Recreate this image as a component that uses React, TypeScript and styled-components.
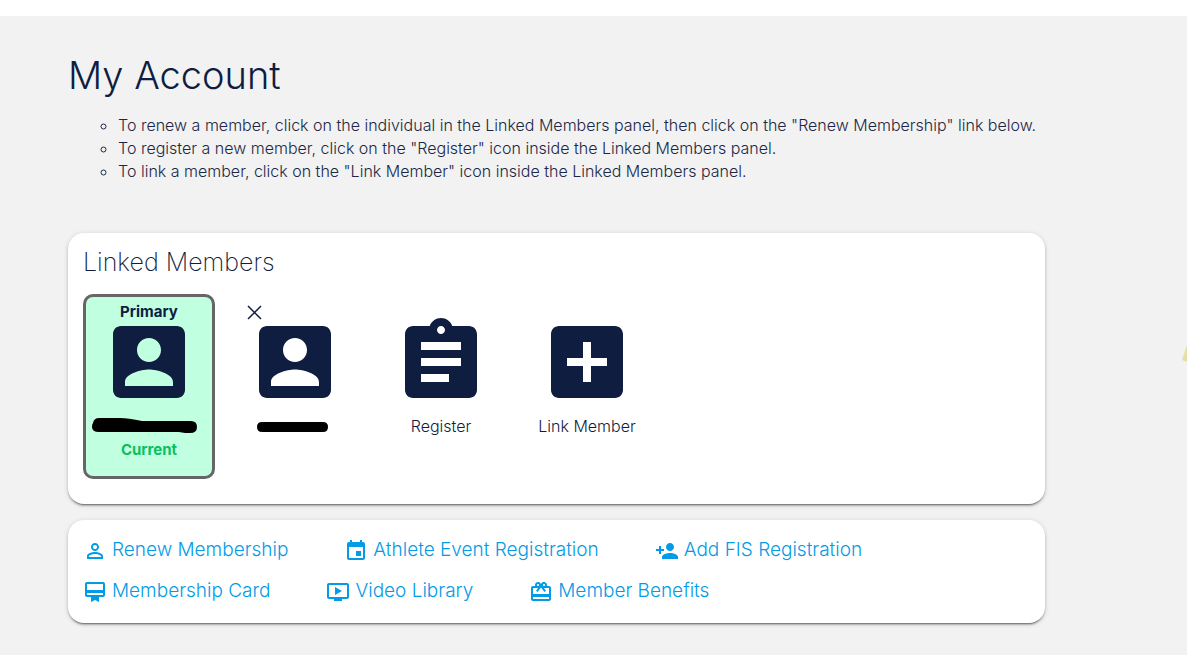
import React from "react";
import styled, { createGlobalStyle } from "styled-components";

const navy = "#0f1d40";
const blue = "#039be5";

const GlobalStyle = createGlobalStyle`
  *, *::before, *::after { box-sizing: border-box; }
  body {
    margin: 0;
    background: #f2f2f2;
    color: ${navy};
    font-family: Inter, "Open Sans", sans-serif;
    font-weight: 300;
    font-size: 16px;
  }
`;

const Page = styled.div`
  position: relative;
  min-height: 100vh;
  overflow: hidden;
  border-top: 16px solid #fff;
`;

const Main = styled.main`
  display: flex;
  flex-direction: column;
  margin: 0 142px 0 68px;
  padding: 35px 0 32px;
`;

const Title = styled.h1`
  margin: 0;
  font-size: 38px;
  line-height: 48px;
  font-weight: 300;
`;

const Steps = styled.ul`
  margin: 15px 0 50px;
  padding-left: 50px;
  list-style: circle;
  line-height: 23px;
  color: #1c2745;
`;

const Panel = styled.section`
  background: #fff;
  border-radius: 16px;
  box-shadow:
    0 2px 2px rgba(0, 0, 0, 0.2),
    0 3px 1px -2px rgba(0, 0, 0, 0.3),
    0 1px 5px rgba(0, 0, 0, 0.16);
  padding: 13px 15px 25px;

  & + & {
    margin-top: 16px;
    padding: 18px 15px 20px;
  }
`;

const PanelTitle = styled.h2`
  margin: 0 0 16px;
  font-size: 25px;
  line-height: 32px;
  font-weight: 200;
`;

const Tiles = styled.div`
  display: flex;
  flex-wrap: wrap;
  gap: 14px;
`;

const Tile = styled.div<{ $selected?: boolean }>`
  display: flex;
  flex-direction: column;
  align-items: stretch;
  width: 132px;
  min-height: 185px;
  padding-top: 3px;
  border: 3px solid ${(p) => (p.$selected ? "#666" : "transparent")};
  border-radius: 10px;
  background: ${(p) => (p.$selected ? "#c0ffe0" : "transparent")};
`;

const TileTop = styled.div`
  display: flex;
  height: 26px;
  padding: 0 10px 2px;
`;

const Badge = styled.strong`
  flex: 1;
  text-align: center;
  font-size: 15px;
  font-weight: 700;
  line-height: 24px;
`;

const CloseButton = styled.button`
  width: 24px;
  height: 24px;
  padding: 0;
  border: 0;
  background: none;
  color: ${navy};
  cursor: pointer;
`;

const TileButton = styled.button`
  display: flex;
  flex-direction: column;
  align-items: center;
  padding: 0;
  border: 0;
  background: none;
  color: ${navy};
  font: inherit;
  line-height: 23px;
  cursor: pointer;
`;

const TileIcon = styled.svg`
  width: 72px;
  height: 72px;
  margin-bottom: 17px;
  overflow: visible;
  fill: currentColor;
`;

const Redaction = styled.svg`
  display: block;
  width: 126px;
  height: 23px;
  fill: #000;
`;

const Status = styled.strong`
  color: #0abf61;
  font-size: 15px;
  font-weight: 700;
`;

const LinkRow = styled.nav`
  display: flex;
  flex-wrap: wrap;
  gap: 0 56px;

  & + & {
    margin-top: 17px;
  }
`;

const ActionLink = styled.a`
  display: flex;
  align-items: center;
  gap: 5px;
  color: ${blue};
  font-size: 19px;
  line-height: 24px;
  text-decoration: none;
`;

const Glyph = styled.svg`
  display: block;
  flex: none;
  width: 24px;
  height: 24px;
  margin-top: 1px;
  margin-bottom: -1px;
  fill: currentColor;
`;

const CloseGlyph = styled.svg`
  display: block;
  width: 24px;
  height: 24px;
  fill: none;
  stroke: currentColor;
  stroke-width: 1.5;
`;

const Accent = styled.svg`
  position: absolute;
  top: 329px;
  right: 0;
  width: 5px;
  height: 17px;
`;

const icons = {
  account:
    "M3 5v14c0 1.1.89 2 2 2h14c1.1 0 2-.9 2-2V5c0-1.1-.9-2-2-2H5c-1.11 0-2 .9-2 2zm12 4c0 1.66-1.34 3-3 3s-3-1.34-3-3 1.34-3 3-3 3 1.34 3 3zm-9 8c0-2 4-3.1 6-3.1s6 1.1 6 3.1v1H6v-1z",
  register:
    "M19 3h-4.18C14.4 1.84 13.3 1 12 1c-1.3 0-2.4.84-2.82 2H5c-1.1 0-2 .9-2 2v14c0 1.1.9 2 2 2h14c1.1 0 2-.9 2-2V5c0-1.1-.9-2-2-2zm-7 0c.55 0 1 .45 1 1s-.45 1-1 1-1-.45-1-1 .45-1 1-1zm2 14H7v-2h7v2zm3-4H7v-2h10v2zm0-4H7V7h10v2z",
  add: "M19 3H5c-1.11 0-2 .9-2 2v14c0 1.1.89 2 2 2h14c1.1 0 2-.9 2-2V5c0-1.1-.9-2-2-2zm-2 10h-4v4h-2v-4H7v-2h4V7h2v4h4v2z",
  person:
    "M12 5.9c1.16 0 2.1.94 2.1 2.1s-.94 2.1-2.1 2.1S9.9 9.16 9.9 8s.94-2.1 2.1-2.1m0 9c2.97 0 6.1 1.46 6.1 2.1v1.1H5.9V17c0-.64 3.13-2.1 6.1-2.1M12 4C9.79 4 8 5.79 8 8s1.79 4 4 4 4-1.79 4-4-1.79-4-4-4zm0 9c-2.67 0-8 1.34-8 4v3h16v-3c0-2.66-5.33-4-8-4z",
  event:
    "M17 12h-5v5h5v-5zM16 1v2H8V1H6v2H5c-1.11 0-1.99.9-1.99 2L3 19c0 1.1.89 2 2 2h14c1.1 0 2-.9 2-2V5c0-1.1-.9-2-2-2h-1V1h-2zm3 18H5V8h14v11z",
  personAdd:
    "M15 12c2.21 0 4-1.79 4-4s-1.79-4-4-4-4 1.79-4 4 1.79 4 4 4zm-9-2V7H4v3H1v2h3v3h2v-3h3v-2H6zm9 4c-2.67 0-8 1.34-8 4v2h16v-2c0-2.66-5.33-4-8-4z",
  card: "M20 2H4c-1.11 0-2 .89-2 2v11c0 1.11.89 2 2 2h4v5l4-2 4 2v-5h4c1.11 0 2-.89 2-2V4c0-1.11-.89-2-2-2zm0 13H4v-2h16v2zm0-5H4V4h16v6z",
  video:
    "M21 3H3c-1.11 0-2 .89-2 2v12c0 1.1.89 2 2 2h5v2h8v-2h5c1.1 0 1.99-.9 1.99-2L23 5c0-1.11-.9-2-2-2zm0 14H3V5h18v12zm-5-6l-7 4V7z",
  gift: "M20 6h-2.18c.11-.31.18-.65.18-1 0-1.66-1.34-3-3-3-1.05 0-1.96.54-2.5 1.35l-.5.67-.5-.68C10.96 2.54 10.05 2 9 2 7.34 2 6 3.34 6 5c0 .35.07.69.18 1H4c-1.11 0-1.99.89-1.99 2L2 19c0 1.11.89 2 2 2h16c1.11 0 2-.89 2-2V8c0-1.11-.89-2-2-2zm-5-2c.55 0 1 .45 1 1s-.45 1-1 1-1-.45-1-1 .45-1 1-1zM9 4c.55 0 1 .45 1 1s-.45 1-1 1-1-.45-1-1 .45-1 1-1zm11 15H4v-2h16v2zm0-5H4V8h5.08L7 10.83 8.62 12 11 8.76l1-1.36 1 1.36L15.38 12 17 10.83 14.92 8H20v6z",
};

type IconName = keyof typeof icons;

const steps = [
  'To renew a member, click on the individual in the Linked Members panel, then click on the "Renew Membership" link below.',
  'To register a new member, click on the "Register" icon inside the Linked Members panel.',
  'To link a member, click on the "Link Member" icon inside the Linked Members panel.',
];

const linkRows: { icon: IconName; label: string }[][] = [
  [
    { icon: "person", label: "Renew Membership" },
    { icon: "event", label: "Athlete Event Registration" },
    { icon: "personAdd", label: "Add FIS Registration" },
  ],
  [
    { icon: "card", label: "Membership Card" },
    { icon: "video", label: "Video Library" },
    { icon: "gift", label: "Member Benefits" },
  ],
];

function BigIcon({ name }: { name: IconName }) {
  return (
    <TileIcon viewBox="3 3 18 18" aria-hidden="true">
      <path d={icons[name]} />
    </TileIcon>
  );
}

export default function App() {
  return (
    <Page>
      <GlobalStyle />
      <Main>
        <Title>My Account</Title>
        <Steps>
          {steps.map((step) => (
            <li key={step}>{step}</li>
          ))}
        </Steps>

        <Panel>
          <PanelTitle>Linked Members</PanelTitle>
          <Tiles>
            <Tile $selected>
              <TileTop>
                <Badge>Primary</Badge>
              </TileTop>
              <TileButton type="button" aria-label="Primary member">
                <BigIcon name="account" />
                <Redaction viewBox="0 0 126 23" aria-hidden="true">
                  <path d="M7 8Q8 3 13 3H34Q42 3 56 6H105Q111 6 111 12Q111 18 104 18H99L93 17H13Q6 17 6 12Q6 9 7 8Z" />
                </Redaction>
                <Status>Current</Status>
              </TileButton>
            </Tile>
            <Tile>
              <TileTop>
                <CloseButton type="button" aria-label="Remove member">
                  <CloseGlyph viewBox="0 0 24 24" aria-hidden="true">
                    <path d="M6 6L19 19M19 6L6 19" />
                  </CloseGlyph>
                </CloseButton>
              </TileTop>
              <TileButton type="button" aria-label="Linked member">
                <BigIcon name="account" />
                <Redaction viewBox="0 0 126 23" aria-hidden="true">
                  <path d="M30 7H91Q96 7 96 12T91 17H30Q25 17 25 12T30 7Z" />
                </Redaction>
              </TileButton>
            </Tile>
            <Tile>
              <TileTop />
              <TileButton type="button">
                <BigIcon name="register" />
                Register
              </TileButton>
            </Tile>
            <Tile>
              <TileTop />
              <TileButton type="button">
                <BigIcon name="add" />
                Link Member
              </TileButton>
            </Tile>
          </Tiles>
        </Panel>

        <Panel>
          {linkRows.map((row, i) => (
            <LinkRow key={i} aria-label={i === 0 ? "Registration" : "Resources"}>
              {row.map(({ icon, label }) => (
                <ActionLink key={label} href="#">
                  <Glyph viewBox="0 0 24 24" aria-hidden="true">
                    <path d={icons[icon]} />
                  </Glyph>
                  {label}
                </ActionLink>
              ))}
            </LinkRow>
          ))}
        </Panel>
      </Main>
      <Accent viewBox="0 0 5 17" aria-hidden="true">
        <path d="M5 0L0 15 5 17Z" fill="#e6dfa4" />
      </Accent>
    </Page>
  );
}
